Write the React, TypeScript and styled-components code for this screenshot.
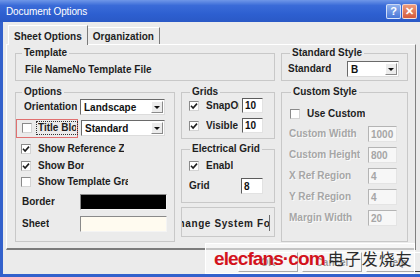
import React from 'react';
import styled, {createGlobalStyle} from 'styled-components';

const GlobalStyle = createGlobalStyle`
  html, body { margin: 0; padding: 0; background: #fff; }
  body { font-family: "Liberation Sans", Arial, sans-serif; }
`;

const Window = styled.div`
  position: relative;
  width: 420px;
  height: 277px;
  display: flex;
  flex-direction: column;
  background: #3361cc;
  overflow: hidden;
`;

const TitleBar = styled.div`
  height: 22px;
  flex: none;
  box-sizing: border-box;
  display: flex;
  align-items: center;
  padding: 1px 3px 0 6px;
  background: linear-gradient(#6f97e8 0%, #3a6bd8 25%, #2d5fd0 65%, #2a59c6 100%);
`;

const Title = styled.span`
  flex: 1;
  color: #fff;
  font-size: 10px;
  letter-spacing: -0.1px;
`;

const CaptionButton = styled.span<{$tone: 'help' | 'close'}>`
  width: 13px;
  height: 13px;
  margin-left: 1px;
  display: flex;
  align-items: center;
  justify-content: center;
  border-radius: 2px;
  border: 1px solid rgba(255, 255, 255, 0.7);
  background: ${p =>
    p.$tone === 'close'
      ? 'linear-gradient(#ec9a7c, #d45a3c)'
      : 'linear-gradient(#8fb0ee, #4a78d8)'};
  color: #fff;
  font-size: 11px;
  font-weight: bold;
  line-height: 1;
`;

const Body = styled.div`
  flex: 1;
  min-height: 0;
  margin: 0 0 3px 3px;
  padding: 3px 0 0 3px;
  background: #ebebeb;
  display: flex;
  flex-direction: column;
  overflow: hidden;
`;

const TabStrip = styled.div`
  height: 19px;
  flex: none;
  display: flex;
  align-items: flex-end;
  padding-left: 2px;
`;

const Tab = styled.div<{$active?: boolean}>`
  position: relative;
  z-index: ${p => (p.$active ? 1 : 0)};
  box-sizing: border-box;
  height: ${p => (p.$active ? '20px' : '17px')};
  margin-bottom: ${p => (p.$active ? '-1px' : '0')};
  padding: ${p => (p.$active ? '2px 5px 0' : '1px 5px 0')};
  display: flex;
  align-items: center;
  background: #ebebeb;
  border-top: 1px solid #fff;
  border-left: ${p => (p.$active ? '1px solid #fff' : 'none')};
  border-right: 1px solid #7a7a7a;
  font-size: 10px;
  font-weight: bold;
  color: #1e1e1e;
`;

const Panel = styled.div`
  width: 410px;
  height: 206px;
  flex: none;
  box-sizing: border-box;
  padding: 2px 7px 0 8px;
  border-top: 1px solid #fff;
  border-left: 1px solid #fff;
  border-right: 1px solid #808080;
  border-bottom: 2px solid #7c7c7c;
  display: grid;
  grid-template-columns: 160px 94px 127px;
  grid-template-rows: 34px 156px;
  column-gap: 6px;
  row-gap: 5px;
`;

const Group = styled.fieldset<{$span?: boolean; $h?: number; $pl?: number; $pt?: number; $gap?: number}>`
  grid-column: ${p => (p.$span ? '1 / 3' : 'auto')};
  margin: 0;
  min-width: 0;
  box-sizing: border-box;
  height: ${p => (p.$h ? `${p.$h}px` : 'auto')};
  padding: ${p => p.$pt ?? 0}px 0 0 ${p => p.$pl ?? 4}px;
  border: 1px solid #c8c8c8;
  display: flex;
  flex-direction: column;
  gap: ${p => p.$gap ?? 0}px;
`;

const Legend = styled.legend`
  margin-left: 2px;
  padding: 0 2px;
  font-size: 10px;
  line-height: 12px;
  font-weight: bold;
  color: #1e1e1e;
`;

const Column = styled.div`
  display: flex;
  flex-direction: column;
  gap: 4px;
`;

const Row = styled.div<{$h: number; $pr?: number}>`
  height: ${p => p.$h}px;
  flex: none;
  display: flex;
  align-items: center;
  padding-right: ${p => p.$pr ?? 0}px;
`;

const Label = styled.span<{$w?: number; $indent?: number; $disabled?: boolean}>`
  flex: none;
  width: ${p => (p.$w ? `${p.$w}px` : 'auto')};
  margin-left: ${p => p.$indent ?? 0}px;
  overflow: hidden;
  white-space: nowrap;
  font-size: 10px;
  line-height: 12px;
  font-weight: bold;
  color: ${p => (p.$disabled ? '#a6a6a6' : '#1e1e1e')};
  text-shadow: ${p => (p.$disabled ? '1px 1px 0 #fafafa' : 'none')};
`;

const CheckBox = styled.span`
  width: 10px;
  height: 10px;
  flex: none;
  box-sizing: border-box;
  margin-left: 1px;
  margin-right: 7px;
  display: flex;
  align-items: center;
  justify-content: center;
  background: #fff;
  border: 1px solid #8a8a8a;
  border-right-color: #d4d4d4;
  border-bottom-color: #d4d4d4;
`;

const Highlight = styled.span`
  display: flex;
  align-items: center;
  box-sizing: border-box;
  height: 19px;
  width: 62px;
  margin-left: -4px;
  padding-left: 4px;
  border: 1px solid #e07070;
`;

const Focus = styled.span`
  display: flex;
  padding: 0 1px;
  margin-left: -2px;
  outline: 1px dotted #333;
`;

const Field = styled.div<{$w: number; $h?: number; $disabled?: boolean}>`
  flex: none;
  width: ${p => p.$w}px;
  height: ${p => p.$h ?? 16}px;
  box-sizing: border-box;
  margin-left: auto;
  padding-left: 2px;
  display: flex;
  align-items: center;
  background: ${p => (p.$disabled ? '#f7f7f7' : '#fff')};
  border: 1px solid;
  border-color: ${p =>
    p.$disabled ? '#b4b4b4 #e4e4e4 #e4e4e4 #b4b4b4' : '#5c5c5c #e2e2e2 #e2e2e2 #5c5c5c'};
  font-size: 10px;
  font-weight: bold;
  color: ${p => (p.$disabled ? '#a6a6a6' : '#111')};
`;

const Swatch = styled.div<{$fill: string}>`
  width: 87px;
  height: 16px;
  box-sizing: border-box;
  margin-left: auto;
  background: ${p => p.$fill};
  border: 1px solid;
  border-color: #8a8a8a #f4f4f4 #f4f4f4 #8a8a8a;
`;

const SelectBox = styled.div<{$w: number}>`
  flex: none;
  width: ${p => p.$w}px;
  height: 16px;
  box-sizing: border-box;
  margin-left: auto;
  padding: 1px 1px 1px 3px;
  display: flex;
  align-items: center;
  background: #fff;
  border: 1px solid;
  border-color: #6a6a6a #dcdcdc #dcdcdc #6a6a6a;
  font-size: 10px;
  font-weight: bold;
  color: #111;
`;

const SelectValue = styled.span`
  flex: 1;
  white-space: nowrap;
  overflow: hidden;
`;

const DropButton = styled.span`
  width: 12px;
  height: 12px;
  box-sizing: border-box;
  display: flex;
  align-items: center;
  justify-content: center;
  background: #ececec;
  border: 1px solid;
  border-color: #fff #8a8a8a #8a8a8a #fff;
`;

const ButtonFrame = styled.div`
  height: 30px;
  box-sizing: border-box;
  padding: 7px 4px 0 0;
  border: 1px solid #c8c8c8;
  display: flex;
  align-items: flex-start;
`;

const FontButton = styled.div`
  flex: 1;
  min-width: 0;
  height: 16px;
  display: flex;
  justify-content: flex-end;
  align-items: center;
  overflow: hidden;
  white-space: nowrap;
  border-right: 1px solid #6c6c6c;
  font-size: 10px;
  font-weight: bold;
  letter-spacing: 0.6px;
  color: #1e1e1e;
`;

const FontButtonText = styled.span`
  flex: none;
  margin-right: -12px;
`;

const ButtonRow = styled.div`
  flex: 1;
  display: flex;
  align-items: center;
  gap: 4px;
  padding-left: 232px;
`;

const DialogButton = styled.div`
  flex: none;
  width: 60px;
  height: 20px;
  box-sizing: border-box;
  display: flex;
  align-items: center;
  justify-content: center;
  border: 1px solid;
  border-color: #fff #404040 #404040 #fff;
  font-size: 10px;
  font-weight: bold;
  color: #1e1e1e;
`;

const Watermark = styled.div`
  position: absolute;
  left: 205px;
  top: 243px;
  width: 210px;
  height: 31px;
  box-sizing: border-box;
  display: flex;
  align-items: flex-end;
  white-space: nowrap;
  overflow: hidden;
  padding: 0 0 5px 8px;
  background: rgba(255, 255, 255, 0.55);
  border: 1px solid rgba(255, 255, 255, 0.95);
`;

const MarkLatin = styled.span`
  flex: none;
  font-family: "Liberation Sans", Arial, sans-serif;
  font-size: 19px;
  font-weight: bold;
  line-height: 19px;
  letter-spacing: -0.9px;
  color: #d3121c;
`;

const MarkCjk = styled.span`
  flex: none;
  margin-left: 3px;
  font-family: "Noto Sans CJK SC", sans-serif;
  font-size: 16px;
  line-height: 19px;
  letter-spacing: 1px;
  color: #2a2a2a;
`;

const Check = () => (
  <svg width="8" height="8" viewBox="0 0 8 8">
    <path d="M1 3.8 L3.1 6 L7 1.6" stroke="#1e1e1e" strokeWidth="1.6" fill="none" />
  </svg>
);

const Arrow = () => (
  <svg width="6" height="3" viewBox="0 0 6 3">
    <path d="M0 0h6L3 3z" fill="#111" />
  </svg>
);

const Select: React.FC<{value: string; w: number}> = ({value, w}) => (
  <SelectBox $w={w}>
    <SelectValue>{value}</SelectValue>
    <DropButton>
      <Arrow />
    </DropButton>
  </SelectBox>
);

const CheckItem: React.FC<{label: string; w?: number; checked?: boolean}> = ({label, w, checked}) => (
  <>
    <CheckBox>{checked && <Check />}</CheckBox>
    <Label $w={w}>{label}</Label>
  </>
);

const customRows = [
  ['Custom Width', '1000'],
  ['Custom Height', '800'],
  ['X Ref Region', '4'],
  ['Y Ref Region', '4'],
  ['Margin Width', '20'],
];

export default function App() {
  return (
    <>
      <GlobalStyle />
      <Window>
        <TitleBar>
          <Title>Document Options</Title>
          <CaptionButton $tone="help">?</CaptionButton>
          <CaptionButton $tone="close">✕</CaptionButton>
        </TitleBar>
        <Body>
          <TabStrip>
            <Tab $active>Sheet Options</Tab>
            <Tab>Organization</Tab>
          </TabStrip>
          <Panel>
            <Group $span $pt={5}>
              <Legend>Template</Legend>
              <Label $indent={5}>File NameNo Template File</Label>
            </Group>
            <Group $pt={2} $pl={6}>
              <Legend>Standard Style</Legend>
              <Row $h={16} $pr={8}>
                <Label>Standard</Label>
                <Select value="B" w={52} />
              </Row>
            </Group>

            <Group>
              <Legend>Options</Legend>
              <Row $h={18} $pr={9}>
                <Label $indent={4}>Orientation</Label>
                <Select value="Landscape" w={85} />
              </Row>
              <Row $h={24} $pr={9}>
                <Highlight>
                  <CheckBox />
                  <Focus>
                    <Label $w={38}>Title Block</Label>
                  </Focus>
                </Highlight>
                <Select value="Standard" w={84} />
              </Row>
              <Row $h={17}>
                <CheckItem checked label="Show Reference Zones" w={86} />
              </Row>
              <Row $h={17}>
                <CheckItem checked label="Show Border" w={46} />
              </Row>
              <Row $h={16}>
                <CheckItem label="Show Template Graphics" w={90} />
              </Row>
              <Row $h={24} $pr={7}>
                <Label $indent={2}>Border</Label>
                <Swatch $fill="#000" />
              </Row>
              <Row $h={20} $pr={7}>
                <Label $indent={2}>Sheet</Label>
                <Swatch $fill="#fffbf0" />
              </Row>
            </Group>

            <Column>
              <Group $h={53} $pl={6} $gap={5}>
                <Legend>Grids</Legend>
                <Row $h={15} $pr={11}>
                  <CheckItem checked label="SnapOn" w={33} />
                  <Field $w={21} $h={15}>10</Field>
                </Row>
                <Row $h={15} $pr={11}>
                  <CheckItem checked label="Visible" w={32} />
                  <Field $w={21} $h={15}>10</Field>
                </Row>
              </Group>
              <Group $h={60} $pl={6} $pt={3} $gap={4}>
                <Legend>Electrical Grid</Legend>
                <Row $h={16}>
                  <CheckItem checked label="Enable" w={27} />
                </Row>
                <Row $h={16} $pr={11}>
                  <Label $indent={1}>Grid</Label>
                  <Field $w={22}>8</Field>
                </Row>
              </Group>
              <ButtonFrame>
                <FontButton>
                  <FontButtonText>Change System Font</FontButtonText>
                </FontButton>
              </ButtonFrame>
            </Column>

            <Group $pl={7} $pt={8} $gap={5}>
              <Legend>Custom Style</Legend>
              <Row $h={15}>
                <CheckItem label="Use Custom" />
              </Row>
              {customRows.map(([name, value]) => (
                <Row key={name} $h={16} $pr={10}>
                  <Label $disabled>{name}</Label>
                  <Field $w={29} $disabled>
                    {value}
                  </Field>
                </Row>
              ))}
            </Group>
          </Panel>
          <ButtonRow>
            <DialogButton>OK</DialogButton>
            <DialogButton>Cancel</DialogButton>
            <DialogButton>Help</DialogButton>
          </ButtonRow>
        </Body>
        <Watermark>
          <MarkLatin>elecfans·com</MarkLatin>
          <MarkCjk>电子发烧友</MarkCjk>
        </Watermark>
      </Window>
    </>
  );
}
